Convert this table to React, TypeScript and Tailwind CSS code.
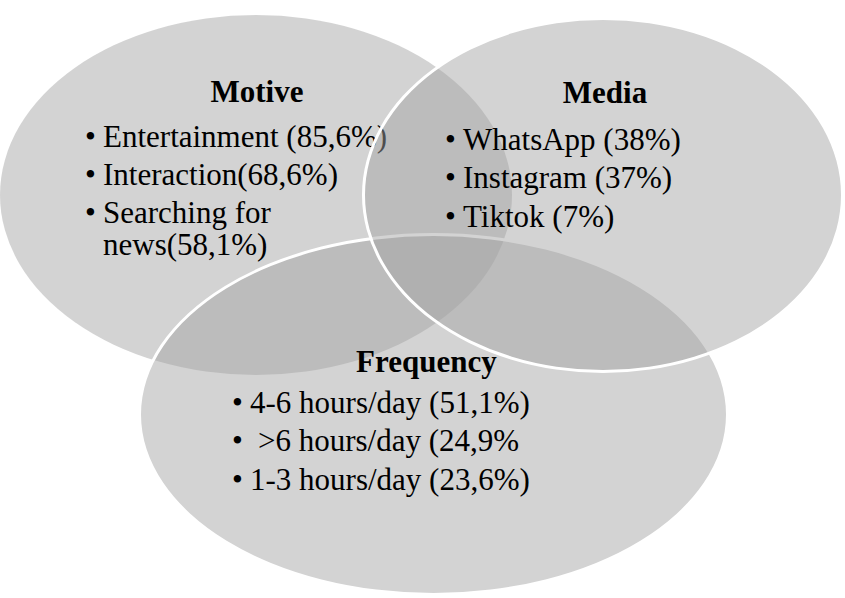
import React from "react";

const serif = { fontFamily: '"Liberation Serif", "Times New Roman", serif' };

function Item({ children, indent = false }: { children: React.ReactNode; indent?: boolean }) {
  return (
    <div className="flex whitespace-nowrap">
      <span className="w-[18px] shrink-0">•</span>
      <span className={indent ? "pl-[8px]" : ""}>{children}</span>
    </div>
  );
}

export default function App() {
  return (
    <div
      className="relative w-[845px] h-[598px] overflow-hidden bg-white text-black text-[31px] leading-[32px]"
      style={serif}
    >
      {/* Motive */}
      <div className="absolute left-0 top-[15px] w-[512px] h-[360px] rounded-[50%] bg-[rgba(163,163,163,0.48)] flex flex-col pt-[60.5px]">
        <div className="pl-[2px] text-center font-bold">Motive</div>
        <div className="mt-[13px] pl-[85px] flex flex-col gap-[6px]">
          <Item>Entertainment (85,6%)</Item>
          <Item>Interaction(68,6%)</Item>
          <Item>
            Searching for
            <br />
            news(58,1%)
          </Item>
        </div>
      </div>

      {/* Frequency */}
      <div className="absolute left-[138px] top-[233px] w-[591px] h-[363px] rounded-[50%] border-[3px] border-white bg-[rgba(163,163,163,0.48)]">
        <div className="relative z-10 flex flex-col pt-[109.5px] pl-[91px]">
          <div className="pl-[124px] font-bold">Frequency</div>
          <div className="mt-[9px] flex flex-col gap-[6.5px]">
            <Item>4-6 hours/day (51,1%)</Item>
            <Item indent>&gt;6 hours/day (24,9%</Item>
            <Item>1-3 hours/day (23,6%)</Item>
          </div>
        </div>
      </div>

      {/* Media */}
      <div className="absolute left-[362px] top-[17px] w-[482px] h-[356px] rounded-[50%] border-[3px] border-white bg-[rgba(163,163,163,0.48)] flex flex-col pt-[56.5px]">
        <div className="pl-[4px] text-center font-bold">Media</div>
        <div className="mt-[15px] pl-[80px] flex flex-col gap-[6.5px]">
          <Item>WhatsApp (38%)</Item>
          <Item>Instagram (37%)</Item>
          <Item>Tiktok (7%)</Item>
        </div>
      </div>
    </div>
  );
}
